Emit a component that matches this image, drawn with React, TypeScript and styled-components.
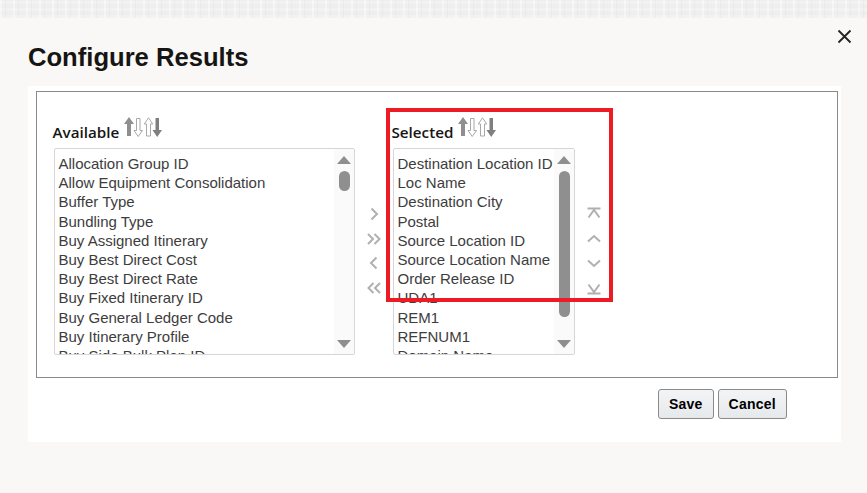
import React from 'react';
import styled, { createGlobalStyle } from 'styled-components';

const GlobalStyle = createGlobalStyle`
  html, body { margin: 0; padding: 0; background: #f9f8f6; }
  body { font-family: "Liberation Sans", Arial, sans-serif; color: #3a3a3a; }
`;

const Page = styled.div`
  width: 867px;
  height: 493px;
  overflow: hidden;
  position: relative;
  background: #f9f8f6;
`;

const TopStrip = styled.div`
  height: 18px;
  background-color: #efeeee;
  background-image:
    repeating-linear-gradient(90deg, rgba(255,255,255,.4) 0 2px, transparent 2px 5px, rgba(228,228,228,.45) 5px 6px, transparent 6px 13px),
    repeating-linear-gradient(0deg, rgba(255,255,255,.25) 0 3px, transparent 3px 7px);
`;

const Header = styled.div`
  height: 68px;
  padding: 0 15px 0 28px;
  display: flex;
  justify-content: space-between;
  align-items: flex-start;
`;

const Title = styled.h1`
  margin: 25px 0 0;
  font-size: 25.6px;
  line-height: 29px;
  font-weight: 700;
  color: #161513;
`;

const CloseButton = styled.button`
  margin-top: 11px;
  width: 16px;
  height: 16px;
  padding: 0;
  border: 0;
  background: none;
  display: flex;
  cursor: pointer;
`;

const Panel = styled.div`
  width: 813px;
  height: 356px;
  margin-left: 28px;
  padding: 5px 3px 0 8px;
  box-sizing: border-box;
  background: #fff;
`;

const Shuttle = styled.div`
  width: 802px;
  height: 287px;
  box-sizing: border-box;
  border: 1px solid #8a8a8a;
  padding: 25px 0 0 16px;
  display: flex;
  align-items: flex-start;
`;

const Column = styled.div<{ $width: number }>`
  width: ${p => p.$width}px;
  flex: none;
`;

const ColumnHead = styled.div`
  height: 31px;
  display: flex;
  align-items: flex-start;
  gap: 5px;
`;

const ColumnLabel = styled.label`
  margin: 5px 0 0 -0.5px;
  font-family: "Open Sans", sans-serif;
  font-size: 15.2px;
  line-height: 20px;
  font-weight: 600;
  color: #161513;
`;

const ListBox = styled.div`
  height: 207px;
  margin-left: 1px;
  box-sizing: border-box;
  border: 1px solid #d6d6d6;
  border-radius: 2px;
  display: flex;
  overflow: hidden;
  background: #fff;
`;

const Items = styled.ul`
  flex: 1;
  min-width: 0;
  margin: 0;
  padding: 5px 0 0 3.5px;
  list-style: none;
  overflow: hidden;
`;

const Item = styled.li`
  height: 19.2px;
  font-size: 15px;
  line-height: 19px;
  white-space: nowrap;
  color: #3d3d3d;
`;

const ScrollTrack = styled.div`
  width: 20px;
  flex: none;
  background: #fafafa;
  display: flex;
  flex-direction: column;
  align-items: center;
  padding: 7px 0 6px;
  box-sizing: border-box;
`;

const ScrollThumb = styled.div<{ $height: number }>`
  width: 11px;
  height: ${p => p.$height}px;
  margin-top: 7px;
  border-radius: 6px;
  background: #8f8f8f;
`;

const ScrollArrow = styled.div<{ $down?: boolean }>`
  width: 0;
  height: 0;
  border-left: 7px solid transparent;
  border-right: 7px solid transparent;
  ${p => p.$down
    ? 'border-top: 8px solid #8f8f8f;'
    : 'border-bottom: 8px solid #8f8f8f;'}
`;

const ScrollSpacer = styled.div`
  flex: 1;
`;

const ArrowColumn = styled.div<{ $width: number; $inset: number }>`
  width: ${p => p.$width}px;
  flex: none;
  height: 238px;
  padding: 89px 0 0 ${p => p.$inset}px;
  box-sizing: border-box;
  display: flex;
  flex-direction: column;
  align-items: center;
  gap: 8.6px;
`;

const ArrowButton = styled.button`
  width: 16px;
  height: 16px;
  padding: 0;
  border: 0;
  background: none;
  display: flex;
  cursor: pointer;
`;

const Footer = styled.div`
  width: 751px;
  margin-top: 11px;
  display: flex;
  justify-content: flex-end;
  gap: 4px;
`;

const Action = styled.button`
  height: 30px;
  padding: 0 10px;
  box-sizing: border-box;
  border: 1px solid #8a8a8a;
  border-radius: 3px;
  background: linear-gradient(#f3f4f5, #e6e9ec);
  font-family: "Liberation Sans", Arial, sans-serif;
  font-size: 14px;
  font-weight: 700;
  letter-spacing: .25px;
  color: #000;
  cursor: pointer;
`;

const Highlight = styled.div`
  position: absolute;
  left: 386px;
  top: 108px;
  width: 227px;
  height: 194px;
  box-sizing: border-box;
  border: 4px solid #ed1c24;
  pointer-events: none;
`;

const Stroke = styled.svg`
  display: block;
  fill: none;
  stroke: #b0b0b0;
  stroke-width: 2;
`;

const Chevron = ({ d }: { d: string }) => (
  <Stroke width="16" height="16" viewBox="0 0 16 16"><path d={d} /></Stroke>
);

const SortIcons = () => (
  <svg width="38" height="21" viewBox="0 0 38 21" style={{ display: 'block' }}>
    <path d="M5 0 10 7H7V19H3V7H0Z" fill="#8f8f8f" />
    <path d="M12.5 1.5H16V13.5H18.5L14.2 19.5 10 13.5H12.5Z" fill="#fff" stroke="#a8a8a8" />
    <path d="M24.5 .8 28.7 7H26.5V19H22.5V7H20.3Z" fill="#fff" stroke="#a8a8a8" />
    <path d="M31.5 1H35V13H38L33.2 20 28.5 13H31.5Z" fill="#7f7f7f" />
  </svg>
);

const available = [
  'Allocation Group ID',
  'Allow Equipment Consolidation',
  'Buffer Type',
  'Bundling Type',
  'Buy Assigned Itinerary',
  'Buy Best Direct Cost',
  'Buy Best Direct Rate',
  'Buy Fixed Itinerary ID',
  'Buy General Ledger Code',
  'Buy Itinerary Profile',
  'Buy Side Bulk Plan ID',
];

const selected = [
  'Destination Location ID',
  'Loc Name',
  'Destination City',
  'Postal',
  'Source Location ID',
  'Source Location Name',
  'Order Release ID',
  'UDA1',
  'REM1',
  'REFNUM1',
  'Domain Name',
];

const moveIcons = [
  'M5.5 2.5 11 8 5.5 13.5',
  'M2 3 7 8 2 13M8.5 3 13.5 8 8.5 13',
  'M10.5 2.5 5 8 10.5 13.5',
  'M7.5 3 2.5 8 7.5 13M14 3 9 8 14 13',
];

const orderIcons = [
  'M1.5 2.5H14.5M2.5 11.5 8 4 13.5 11.5',
  'M2 10.5 8 5 14 10.5',
  'M2 5.5 8 11 14 5.5',
  'M2.5 4.5 8 12 13.5 4.5M1.5 13.5H14.5',
];

const List = ({ items, thumb }: { items: string[]; thumb: number }) => (
  <ListBox>
    <Items>
      {items.map(item => <Item key={item}>{item}</Item>)}
    </Items>
    <ScrollTrack>
      <ScrollArrow />
      <ScrollThumb $height={thumb} />
      <ScrollSpacer />
      <ScrollArrow $down />
    </ScrollTrack>
  </ListBox>
);

export default function App() {
  return (
    <Page>
      <GlobalStyle />
      <TopStrip />
      <Header>
        <Title>Configure Results</Title>
        <CloseButton aria-label="Close">
          <svg width="16" height="16" viewBox="0 0 16 16" fill="none" stroke="#222" strokeWidth="1.8">
            <path d="M2.5 1.5 14.5 13.5M14.5 1.5 2.5 13.5" />
          </svg>
        </CloseButton>
      </Header>
      <Panel>
        <Shuttle>
          <Column $width={302}>
            <ColumnHead>
              <ColumnLabel>Available</ColumnLabel>
              <SortIcons />
            </ColumnHead>
            <List items={available} thumb={20} />
          </Column>
          <ArrowColumn $width={37} $inset={1}>
            {moveIcons.map(d => <ArrowButton key={d}><Chevron d={d} /></ArrowButton>)}
          </ArrowColumn>
          <Column $width={183}>
            <ColumnHead>
              <ColumnLabel>Selected</ColumnLabel>
              <SortIcons />
            </ColumnHead>
            <List items={selected} thumb={146} />
          </Column>
          <ArrowColumn $width={38} $inset={0}>
            {orderIcons.map(d => <ArrowButton key={d}><Chevron d={d} /></ArrowButton>)}
          </ArrowColumn>
        </Shuttle>
        <Footer>
          <Action>Save</Action>
          <Action>Cancel</Action>
        </Footer>
      </Panel>
      <Highlight />
    </Page>
  );
}
